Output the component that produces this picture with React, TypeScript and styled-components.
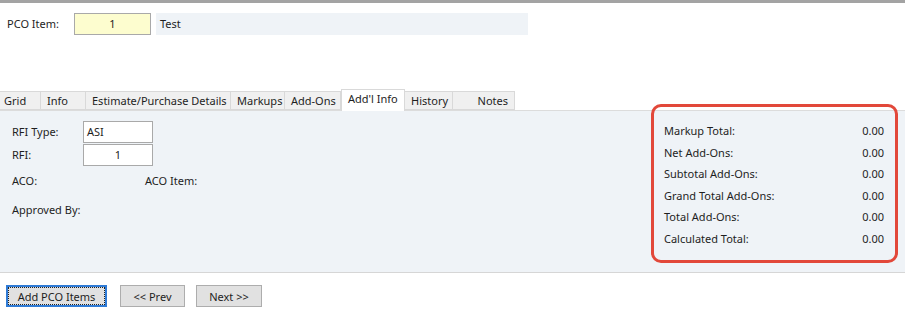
import React from "react";
import styled, { createGlobalStyle } from "styled-components";

const Global = createGlobalStyle`
  html, body { margin: 0; padding: 0; background: #ffffff; }
  body { font-family: "Noto Sans", "DejaVu Sans", sans-serif; font-size: 11px; color: #1e1e1e; }
  * { box-sizing: border-box; }
`;

const Page = styled.div`
  width: 905px;
  height: 311px;
  border-top: 3px solid #a3a3a3;
  display: flex;
  flex-direction: column;
  overflow: hidden;
`;

const HeaderRow = styled.div`
  display: flex;
  align-items: center;
  padding: 10px 0 0 7px;
  height: 32px;
`;

const Label = styled.span<{ $w?: number }>`
  display: inline-block;
  width: ${(p) => (p.$w ? `${p.$w}px` : "auto")};
  white-space: nowrap;
  line-height: 16px;
`;

const Field = styled.div<{ $w: number; $bg: string; $align?: string; $border?: boolean; $h?: number }>`
  width: ${(p) => p.$w}px;
  height: ${(p) => p.$h ?? 22}px;
  background: ${(p) => p.$bg};
  border: 1px solid ${(p) => (p.$border ? "#a9a9a9" : "transparent")};
  text-align: ${(p) => p.$align ?? "left"};
  line-height: ${(p) => (p.$h ?? 22) - 2}px;
  padding: 0 3px;
`;

const Tabs = styled.div`
  display: flex;
  align-items: flex-end;
  margin-top: 56px;
  height: 20px;
  border-bottom: 1px solid #dcdcdc;
`;

const Tab = styled.div<{ $w: number; $active?: boolean; $align?: string }>`
  width: ${(p) => p.$w}px;
  height: ${(p) => (p.$active ? 22 : 19)}px;
  margin-bottom: ${(p) => (p.$active ? -1 : 0)}px;
  background: ${(p) => (p.$active ? "#ffffff" : "#f0f0f0")};
  border: 1px solid #d9d9d9;
  border-bottom: ${(p) => (p.$active ? "none" : "1px solid #d9d9d9")};
  border-left: ${(p) => (p.$active ? "1px solid #d9d9d9" : "none")};
  text-align: ${(p) => p.$align ?? "left"};
  padding: 0 6px;
  line-height: ${(p) => (p.$active ? 18 : 17)}px;
  white-space: nowrap;
  &:first-child { padding-left: 4px; }
`;

const Panel = styled.div`
  position: relative;
  height: 162px;
  background: #eff3f7;
  border-bottom: 1px solid #d6d6d6;
  display: flex;
  justify-content: space-between;
`;

const LeftForm = styled.div`
  display: flex;
  flex-direction: column;
  padding: 8px 0 0 12px;
`;

const FormRow = styled.div<{ $h: number }>`
  display: flex;
  align-items: center;
  height: ${(p) => p.$h}px;
`;

const Totals = styled.div`
  width: 220px;
  margin-right: 21px;
  padding-top: 9px;
  display: flex;
  flex-direction: column;
`;

const TotalRow = styled.div`
  display: flex;
  justify-content: space-between;
  height: 21.6px;
  line-height: 21.6px;
`;

const Highlight = styled.div`
  position: absolute;
  left: 651px;
  top: -7px;
  width: 247px;
  height: 159px;
  border: 3px solid #e2483a;
  border-radius: 10px;
  pointer-events: none;
`;

const ButtonBar = styled.div`
  display: flex;
  gap: 12px;
  padding: 12px 0 0 6px;
`;

const Button = styled.button<{ $w: number; $focused?: boolean }>`
  width: ${(p) => p.$w}px;
  height: 22px;
  font-family: inherit;
  font-size: 11px;
  color: #1e1e1e;
  background: #e1e1e1;
  border: 1px solid ${(p) => (p.$focused ? "#2f7bd6" : "#adadad")};
  outline: ${(p) => (p.$focused ? "1px dotted #222" : "none")};
  outline-offset: ${(p) => (p.$focused ? "-3px" : "0")};
  box-shadow: ${(p) => (p.$focused ? "inset 0 0 0 1px #2f7bd6" : "none")};
  padding: 0;
  &:nth-child(2) { margin-left: 1px; }
  &:nth-child(3) { margin-left: -1px; }
`;

const tabs: { label: string; w: number; active?: boolean; align?: string }[] = [
  { label: "Grid", w: 41 },
  { label: "Info", w: 45 },
  { label: "Estimate/Purchase Details", w: 145 },
  { label: "Markups", w: 54 },
  { label: "Add-Ons", w: 56 },
  { label: "Add'l Info", w: 64, active: true },
  { label: "History", w: 48 },
  { label: "Notes", w: 62, align: "right" },
];

const totals = [
  "Markup Total:",
  "Net Add-Ons:",
  "Subtotal Add-Ons:",
  "Grand Total Add-Ons:",
  "Total Add-Ons:",
  "Calculated Total:",
];

export default function App() {
  return (
    <>
      <Global />
      <Page>
        <HeaderRow>
          <Label $w={67}>PCO Item:</Label>
          <Field $w={77} $bg="#fdfdcf" $align="center" $border>1</Field>
          <div style={{ width: 5 }} />
          <Field $w={372} $bg="#eff3f7">Test</Field>
        </HeaderRow>
        <Tabs>
          {tabs.map((t) => (
            <Tab key={t.label} $w={t.w} $active={t.active} $align={t.align}>
              {t.label}
            </Tab>
          ))}
        </Tabs>
        <Panel>
          <LeftForm>
            <FormRow $h={25}>
              <Label $w={71}>RFI Type:</Label>
              <Field $w={70} $bg="#ffffff" $border $h={22}>ASI</Field>
            </FormRow>
            <FormRow $h={22}>
              <Label $w={71}>RFI:</Label>
              <Field $w={70} $bg="#ffffff" $align="center" $border $h={22}>1</Field>
            </FormRow>
            <FormRow $h={30}>
              <Label $w={133}>ACO:</Label>
              <Label>ACO Item:</Label>
            </FormRow>
            <FormRow $h={28}>
              <Label>Approved By:</Label>
            </FormRow>
          </LeftForm>
          <Totals>
            {totals.map((t) => (
              <TotalRow key={t}>
                <span>{t}</span>
                <span>0.00</span>
              </TotalRow>
            ))}
          </Totals>
          <Highlight />
        </Panel>
        <ButtonBar>
          <Button $w={101} $focused>Add PCO Items</Button>
          <Button $w={65}>&lt;&lt; Prev</Button>
          <Button $w={66}>Next &gt;&gt;</Button>
        </ButtonBar>
      </Page>
    </>
  );
}
